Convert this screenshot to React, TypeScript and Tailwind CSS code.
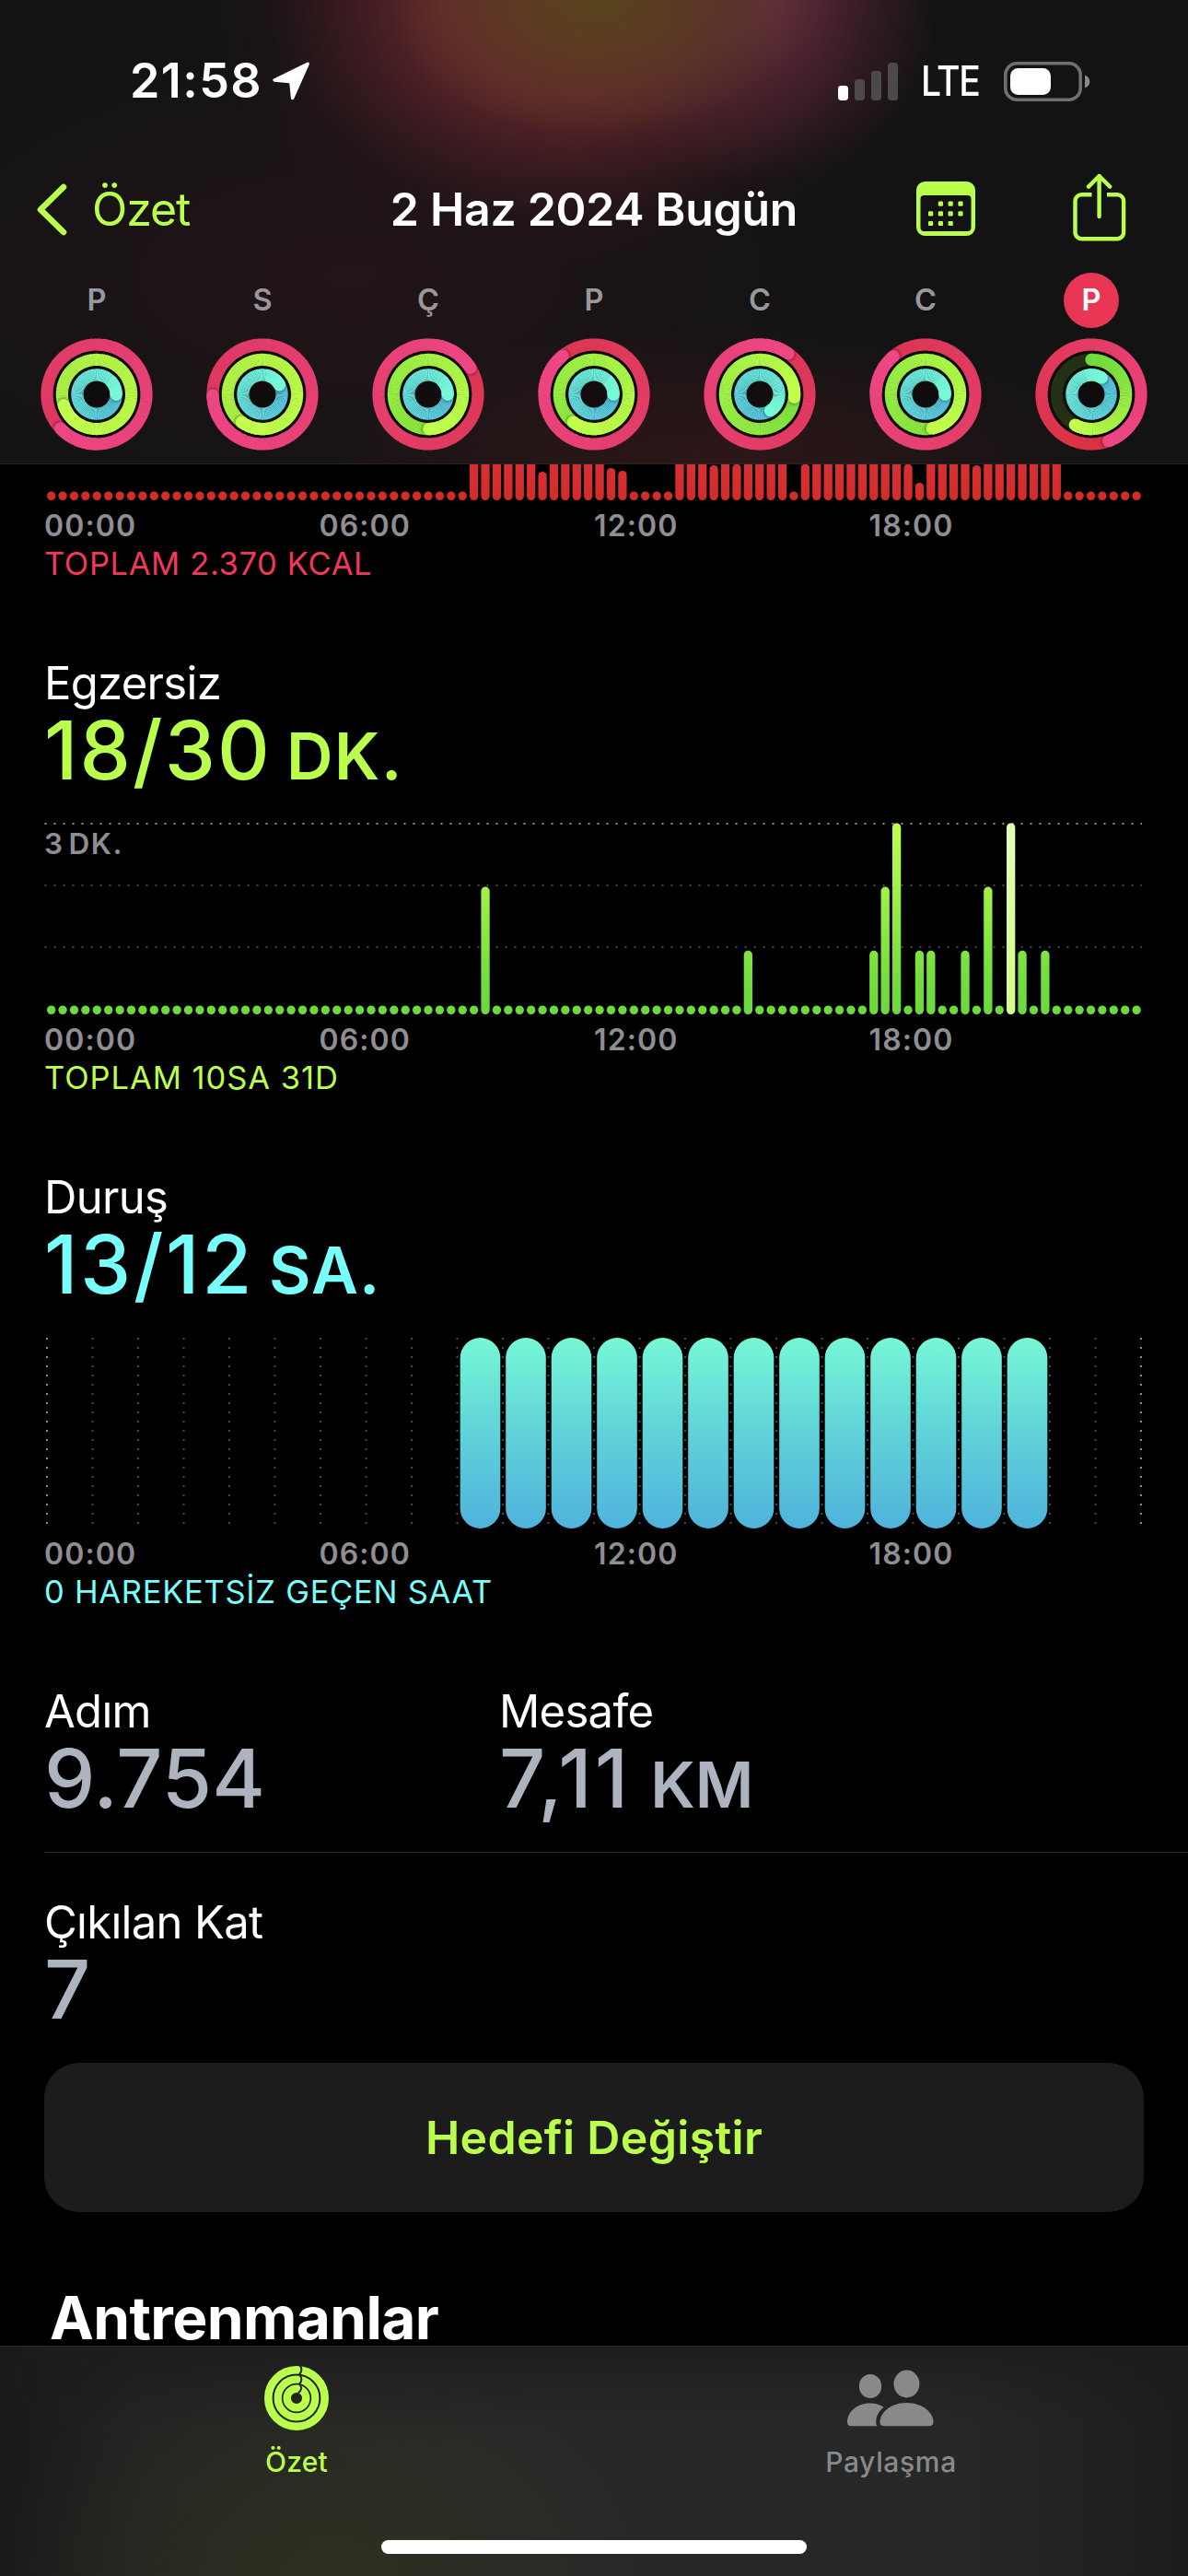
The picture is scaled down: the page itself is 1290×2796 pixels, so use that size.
import type { ReactNode } from 'react';

/* ---------- status bar ---------- */

function LocationArrow() {
  return (
    <svg className="h-[42px] w-[42px]" viewBox="0 0 42 42">
      <path
        d="M39.2 2.2 22.6 39.6 21 23.3a2 2 0 0 0-1.8-1.8L3 20Z"
        fill="#fff"
        stroke="#fff"
        strokeWidth="3.4"
        strokeLinejoin="round"
      />
    </svg>
  );
}

function Signal() {
  return (
    <svg className="h-[41px] w-[65px]" viewBox="0 0 65 41">
      <rect x="0" y="25" width="11" height="16" rx="3.4" fill="#fff" />
      <rect x="18" y="18" width="11" height="23" rx="3.4" fill="#4b494b" />
      <rect x="36" y="9" width="11" height="32" rx="3.4" fill="#4b494b" />
      <rect x="54" y="0" width="11" height="41" rx="3.4" fill="#4b494b" />
    </svg>
  );
}

function Battery() {
  return (
    <svg className="h-[43px] w-[94px]" viewBox="0 0 94 43">
      <rect x="1.8" y="1.8" width="81.4" height="39.4" rx="12.5" fill="none" stroke="#707072" strokeWidth="3.6" />
      <rect x="7" y="7" width="44" height="29" rx="8.5" fill="#fff" />
      <path d="M88 14.5c7 2.2 7 11.8 0 14Z" fill="#8a8a8c" />
    </svg>
  );
}

function StatusBar() {
  return (
    <div className="mt-[58px] flex h-[60px] items-center pl-[141px] pr-[106px] text-white">
      <span className="w-[154px] text-[52px] leading-[60px] font-semibold tracking-[1.4px]">21:58</span>
      <LocationArrow />
      <div className="ml-auto flex items-center">
        <Signal />
        <span className="mr-[27px] ml-[25px] w-[63px] origin-left scale-x-[0.88] text-[44.5px] leading-[60px] font-medium tracking-[-1.6px]">
          LTE
        </span>
        <Battery />
      </div>
    </div>
  );
}

/* ---------- navigation bar ---------- */

function CalendarIcon() {
  const rows = [[1, 2, 3], [0, 1, 2, 3], [0, 1, 2]];
  return (
    <svg className="h-[60px] w-[64px]" viewBox="0 0 64 60">
      <path
        fill="#baff4b"
        fillRule="evenodd"
        d="M9.5 0h45a9.5 9.5 0 0 1 9.5 9.5v40a9.5 9.5 0 0 1-9.5 9.5h-45A9.5 9.5 0 0 1 0 49.5v-40A9.5 9.5 0 0 1 9.5 0ZM8.500 15a4 4 0 0 0-4 4v31a4 4 0 0 0 4 4h47a4 4 0 0 0 4-4V19a4 4 0 0 0-4-4Z"
      />
      {rows.map((cols, r) =>
        cols.map((c) => (
          <rect key={`${r}-${c}`} x={13 + c * 10.8} y={21.5 + r * 10.7} width="5.2" height="5.2" rx="1.2" fill="#baff4b" />
        )),
      )}
    </svg>
  );
}

function ShareIcon() {
  return (
    <svg
      className="h-[74px] w-[58px]"
      viewBox="0 0 58 74"
      fill="none"
      stroke="#baff4b"
      strokeWidth="4.4"
      strokeLinecap="round"
      strokeLinejoin="round"
    >
      <path strokeLinecap="butt" d="M20.5 23.2H9.5a7 7 0 0 0-7 7v34a7 7 0 0 0 7 7h38.600a7 7 0 0 0 7-7v-34a7 7 0 0 0-7-7H37" />
      <path d="M28.6 47V3M17 14.6 28.6 3l11.6 11.6" />
    </svg>
  );
}

function NavBar() {
  return (
    <div className="mt-[64px] grid h-[90px] grid-cols-[1fr_auto_1fr] items-center">
      <div className="flex items-center pl-[38px] text-[#baff4b]">
        <svg className="mr-[22px] h-[60px] w-[40px]" viewBox="0 0 40 60">
          <path d="M31 6 6 30.5 31 55" fill="none" stroke="#baff4b" strokeWidth="6.6" strokeLinecap="round" strokeLinejoin="round" />
        </svg>
        <span className="text-[50px] leading-[60px] tracking-[-1.1px]">Özet</span>
      </div>
      <h1 className="text-[50px] leading-[60px] font-semibold tracking-[-0.3px] text-white">2 Haz 2024 Bugün</h1>
      <div className="flex items-center justify-end gap-[106px] pr-[67px]">
        <CalendarIcon />
        <div className="-mt-[4px]">
          <ShareIcon />
        </div>
      </div>
    </div>
  );
}

/* ---------- activity rings ---------- */

type Rgb = [number, number, number];

type RingSpec = { radius: number; head: number; from: Rgb; to: Rgb; open?: boolean };

const mix = (a: Rgb, b: Rgb, t: number) => `rgb(${a.map((v, i) => Math.round(v + (b[i] - v) * t)).join(',')})`;

const point = (r: number, deg: number): [number, number] => {
  const a = ((deg - 90) * Math.PI) / 180;
  return [61 + r * Math.cos(a), 61 + r * Math.sin(a)];
};

const arc = (r: number, a: number, b: number) => {
  const [x1, y1] = point(r, a);
  const [x2, y2] = point(r, b);
  return `M${x1} ${y1}A${r} ${r} 0 0 1 ${x2} ${y2}`;
};

function Ring({ radius, head, from, to, open }: RingSpec) {
  const start = open ? 0 : head - 360;
  const steps = 90;
  const span = (head - start) / steps;
  const [hx, hy] = point(radius, head);
  const [sx, sy] = point(radius, head + 120 / radius);
  const segment = (i: number) => (
    <path
      key={i}
      d={arc(radius, start + i * span - 0.3, start + (i + 1) * span + 0.3)}
      stroke={mix(from, to, (i + 0.5) / steps)}
      strokeWidth="13.2"
      fill="none"
    />
  );
  const all = Array.from({ length: steps }, (_, i) => i);
  return (
    <g>
      {open && (
        <>
          <circle cx="61" cy="61" r={radius} fill="none" stroke="#233014" strokeWidth="13.2" />
          <circle cx="61" cy={61 - radius} r="6.6" fill={mix(from, to, 0)} />
        </>
      )}
      {all.map(segment)}
      {!open && <circle cx={sx} cy={sy} r="5.8" fill="#000" opacity="0.36" filter="url(#head-shadow)" />}
      {all.slice(-12).map(segment)}
      <circle cx={hx} cy={hy} r="6.6" fill={mix(from, to, 1)} />
    </g>
  );
}

const PINK: Rgb = [237, 70, 133];
const LIME: Rgb = [194, 255, 76];
const AQUA: Rgb = [118, 249, 216];
const SKY: Rgb = [84, 192, 220];

type Day = { label: string; today?: boolean; move: [number, Rgb]; exercise: [number, Rgb]; open?: boolean; stand: number };

const DAYS: Day[] = [
  { label: 'P', move: [227, [222, 56, 96]], exercise: [252, [170, 238, 68]], stand: 91 },
  { label: 'S', move: [269, [222, 56, 96]], exercise: [217, [170, 238, 68]], stand: 61 },
  { label: 'Ç', move: [58, [220, 54, 82]], exercise: [179, [132, 228, 62]], stand: 91 },
  { label: 'P', move: [321, [220, 54, 82]], exercise: [217, [142, 232, 64]], stand: 91 },
  { label: 'C', move: [35, [222, 54, 86]], exercise: [95, [124, 224, 62]], stand: 147 },
  { label: 'C', move: [320, [220, 54, 82]], exercise: [169, [132, 228, 62]], stand: 91 },
  { label: 'P', today: true, move: [160, [217, 48, 64]], exercise: [208, [110, 219, 62]], open: true, stand: 32.5 },
];

function DayRings({ day }: { day: Day }) {
  return (
    <div className="flex flex-col items-center">
      <div
        className={
          day.today
            ? 'flex h-[60px] w-[60px] items-center justify-center rounded-full bg-[#e93654] text-[32.5px] leading-[60px] font-semibold text-white'
            : 'flex h-[60px] w-[60px] items-center justify-center text-[32.5px] leading-[60px] font-semibold text-[#98989d]'
        }
      >
        {day.label}
      </div>
      <svg className="mt-[11px] h-[122px] w-[122px]" viewBox="0 0 122 122">
        <circle cx="61" cy="61" r="50" fill="#0d0a0b" fillOpacity="0.7" />
        <Ring radius={54} head={day.move[0]} from={day.move[1]} to={PINK} />
        <Ring radius={37.6} head={day.exercise[0]} from={day.exercise[1]} to={LIME} open={day.open} />
        <Ring radius={21.1} head={day.stand} from={SKY} to={AQUA} />
      </svg>
    </div>
  );
}

function Header() {
  return (
    <header className="relative h-[504px] shrink-0 overflow-hidden border-b border-[#232323] bg-[#131313]">
      <div className="absolute inset-0 bg-[radial-gradient(ellipse_520px_260px_at_380px_300px,rgba(70,24,36,0.3),transparent)]" />
      <div className="absolute inset-0 bg-[radial-gradient(ellipse_440px_150px_at_780px_504px,rgba(86,28,32,0.42),transparent)]" />
      <div className="absolute inset-0 bg-[radial-gradient(ellipse_400px_290px_at_620px_0px,rgba(112,44,50,1)_0%,rgba(104,40,46,0.92)_35%,rgba(84,32,40,0.6)_60%,rgba(50,22,28,0.25)_82%,transparent)]" />
      <div className="absolute inset-0 bg-[radial-gradient(ellipse_190px_200px_at_830px_0px,rgba(102,48,66,0.85)_0%,rgba(90,40,56,0.5)_45%,transparent)]" />
      <div className="absolute inset-0 bg-[radial-gradient(ellipse_230px_150px_at_650px_0px,rgba(88,68,28,1)_0%,rgba(90,62,32,0.75)_42%,transparent)]" />
      <div className="relative flow-root">
        <StatusBar />
        <NavBar />
        <div className="mt-[24px] grid grid-cols-7 px-[15px]">
          {DAYS.map((day, i) => (
            <DayRings key={i} day={day} />
          ))}
        </div>
      </div>
    </header>
  );
}

/* ---------- charts ---------- */

const SLOTS = Array.from({ length: 96 }, (_, i) => i);
const slotX = (i: number) => 51 + i * 12.405;

const MOVE_SHORT: Record<number, number> = { 43: 31, 49: 35, 50: 32, 58: 38, 60: 39.5, 66: 39.5, 75: 39.5, 76: 19, 81: 38 };

function moveHeight(i: number) {
  if (i < 37 || (i > 50 && i < 55) || i === 65 || i > 88) return 9.5;
  return MOVE_SHORT[i] ?? 60;
}

function MoveChart() {
  return (
    <svg className="h-[39px] w-[1290px] overflow-hidden" viewBox="0 0 1290 39">
      <defs>
        <linearGradient id="move" gradientUnits="userSpaceOnUse" x1="0" y1="39" x2="0" y2="0">
          <stop offset="0" stopColor="#d22c28" />
          <stop offset="1" stopColor="#d63036" />
        </linearGradient>
      </defs>
      {SLOTS.map((i) => {
        const h = moveHeight(i);
        return <rect key={i} x={slotX(i)} y={39 - h} width="9.3" height={h} rx="4.65" fill="url(#move)" />;
      })}
    </svg>
  );
}

const EXERCISE: Record<number, number> = { 38: 2, 61: 1, 72: 1, 73: 2, 74: 3, 76: 1, 77: 1, 80: 1, 82: 2, 84: 3, 85: 1, 87: 1 };

function ExerciseChart() {
  return (
    <div className="relative h-[208px]">
      <svg className="h-[208px] w-[1290px]" viewBox="0 0 1290 208">
        <defs>
          <linearGradient id="exercise" gradientUnits="userSpaceOnUse" x1="0" y1="208" x2="0" y2="0">
            <stop offset="0" stopColor="#6bd93d" />
            <stop offset="0.15" stopColor="#70dc3e" />
            <stop offset="1" stopColor="#c2ff4d" />
          </linearGradient>
          <linearGradient id="exercise-now" gradientUnits="userSpaceOnUse" x1="0" y1="208" x2="0" y2="0">
            <stop offset="0" stopColor="#d2ff88" />
            <stop offset="1" stopColor="#e2ffb8" />
          </linearGradient>
        </defs>
        {[1, 68, 135].map((y, i) => (
          <line key={y} x1="48.5" x2="1240" y1={y} y2={y} stroke={i === 0 ? '#8e8e93' : '#48484a'} strokeWidth="2" strokeDasharray="2 8" />
        ))}
        {SLOTS.map((i) => {
          const level = EXERCISE[i] ?? 0;
          const h = level ? level * 69.2 : 9.5;
          return (
            <rect
              key={i}
              x={slotX(i)}
              y={208 - h}
              width="9.3"
              height={h}
              rx="4.65"
              fill={i === 84 ? 'url(#exercise-now)' : 'url(#exercise)'}
            />
          );
        })}
      </svg>
      <span className="absolute top-[1px] left-[48px] text-[31.5px] leading-[44px] font-semibold tracking-[1.5px] text-[#8e8e93]">
        3<span className="ml-[5px]">DK.</span>
      </span>
    </div>
  );
}

function StandChart() {
  const lines = Array.from({ length: 25 }, (_, i) => i);
  const bars = Array.from({ length: 13 }, (_, i) => i + 9);
  return (
    <svg className="h-[207px] w-[1290px]" viewBox="0 0 1290 207">
      <defs>
        <linearGradient id="stand" x1="0" y1="1" x2="0" y2="0">
          <stop offset="0" stopColor="#4fb3dc" />
          <stop offset="0.5" stopColor="#60d2d9" />
          <stop offset="1" stopColor="#76f7d6" />
        </linearGradient>
      </defs>
      {lines.map((i) => (
        <line
          key={i}
          x1={51 + i * 49.5}
          x2={51 + i * 49.5}
          y1="0"
          y2="203"
          stroke={i === 0 || i === 24 ? '#8e8e93' : '#48484a'}
          strokeWidth="2"
          strokeDasharray="2 8"
        />
      ))}
      {bars.map((i) => (
        <rect key={i} x={54.2 + i * 49.5} y="0" width="43.6" height="207" rx="21.8" fill="url(#stand)" />
      ))}
    </svg>
  );
}

function Axis() {
  return (
    <div className="mt-[6px] grid w-[1242px] grid-cols-[repeat(4,298.5px)] pl-[48px] text-[32px] leading-[44px] font-semibold tracking-[1.1px] text-[#8e8e93]">
      {['00:00', '06:00', '12:00', '18:00'].map((t) => (
        <span key={t}>{t}</span>
      ))}
    </div>
  );
}

function Metric({ title, children }: { title: string; children: ReactNode }) {
  return (
    <div>
      <div className="text-[49px] leading-[59px] tracking-[-0.7px] text-white">{title}</div>
      <div className="text-[88px] leading-[86px] font-medium whitespace-nowrap">{children}</div>
    </div>
  );
}

/* ---------- tab bar ---------- */

function RingsTabIcon() {
  return (
    <svg className="-ml-px h-[70px] w-[70px]" viewBox="-35 -35 70 70" fill="none">
      <circle r="30.7" stroke="#baff4b" strokeWidth="8.6" />
      <circle r="20.3" stroke="#baff4b" strokeWidth="8.2" />
      <circle r="10.3" stroke="#baff4b" strokeWidth="8.4" />
      <g stroke="#232524" strokeWidth="2">
        <path d="M3.5-36Q7.5-30.5 3-25.5" />
        <path d="M3.5-25.2Q7.5-20.2 3-15.5" />
        <path d="M3.5-15.2Q7.5-10 1.5-5.2" />
      </g>
    </svg>
  );
}

function PeopleIcon() {
  return (
    <svg className="-ml-px h-[62px] w-[94px]" viewBox="0 0 94 62" fill="#89898b">
      <ellipse cx="25" cy="18" rx="12.2" ry="13" />
      <ellipse cx="64.5" cy="15.5" rx="14" ry="15" />
      <path d="M25 36.5c6 0 11 1.6 14.6 4.3C34.2 45 31.4 50.5 31.2 56.5c0 2 .4 3.5 1.2 4.7H4.5C1.6 61.2 0 59.8 0 57 0 47 9.500 36.500 25 36.500Z" />
      <path d="M64.5 36C82 36 93.5 47 93.5 57c0 2.900-1.700 4.300-4.700 4.300H40.200c-3 0-4.700-1.400-4.700-4.300C35.500 47 47 36 64.500 36Z" />
    </svg>
  );
}

function TabBar() {
  return (
    <nav className="relative h-[250px] shrink-0 overflow-hidden border-t border-[#2b2b2b] bg-[linear-gradient(to_right,#191919,#222323_12%,#262828_40%,#262828_80%,#1c1d1d)]">
      <div className="absolute inset-0 bg-[radial-gradient(ellipse_360px_250px_at_350px_250px,rgba(54,57,28,0.55),transparent)]" />
      <div className="absolute inset-0 bg-[linear-gradient(to_bottom,rgba(28,28,28,0.8),transparent_35%)]" />
      <div className="relative grid grid-cols-2">
        <div className="flex flex-col items-center pt-[21px] text-[#baff4b]">
          <RingsTabIcon />
          <span className="mt-[14px] -ml-px text-[30px] leading-[40px] font-medium tracking-[0.2px]">Özet</span>
        </div>
        <div className="flex flex-col items-center pt-[25px] text-[#89898b]">
          <PeopleIcon />
          <span className="mt-[18px] text-[30px] leading-[40px] font-medium tracking-[0.65px]">Paylaşma</span>
        </div>
      </div>
      <div className="absolute top-[210px] left-[414px] h-[15px] w-[462px] rounded-full bg-white" />
    </nav>
  );
}

/* ---------- screen ---------- */

export default function App() {
  return (
    <div className="flex h-[2796px] w-[1290px] flex-col overflow-hidden bg-black font-['Inter',sans-serif] antialiased">
      <svg className="absolute h-0 w-0">
        <defs>
          <filter id="head-shadow" x="-50%" y="-50%" width="200%" height="200%">
            <feGaussianBlur stdDeviation="1.4" />
          </filter>
        </defs>
      </svg>
      <Header />
      <main className="flex h-[2042px] shrink-0 flex-col overflow-hidden">
        <section className="flex flex-col">
          <MoveChart />
          <Axis />
          <p className="pl-[48px] text-[34.5px] leading-[38px] tracking-[0.63px] text-[#f0385a]">TOPLAM 2.370 KCAL</p>
        </section>

        <section className="mt-[81px] flex flex-col">
          <div className="pl-[48px] text-[#baff4b]">
            <Metric title="Egzersiz">
              <span className="tracking-[2.1px]">18/30</span>
              <span className="ml-[16px] text-[70px] leading-none font-semibold tracking-[1.6px]">DK.</span>
            </Metric>
          </div>
          <div className="mt-[36px]">
            <ExerciseChart />
          </div>
          <Axis />
          <p className="pl-[48px] text-[34.5px] leading-[38px] tracking-[0.95px] text-[#baff4b]">TOPLAM 10SA 31D</p>
        </section>

        <section className="mt-[81px] flex flex-col">
          <div className="pl-[48px] text-[#76fffb]">
            <Metric title="Duruş">
              <span className="tracking-[2.6px]">13/12</span>
              <span className="ml-[16px] text-[70px] leading-none font-semibold tracking-[1.2px]">SA.</span>
            </Metric>
          </div>
          <div className="mt-[37px] h-[207px]">
            <StandChart />
          </div>
          <Axis />
          <p className="pl-[48px] text-[34.5px] leading-[38px] tracking-[0.72px] text-[#76fffb]">0 HAREKETSİZ GEÇEN SAAT</p>
        </section>

        <section className="mt-[81px] ml-[48px] flex flex-col text-[#adb3bf]">
          <div className="grid grid-cols-[494px_1fr] border-b border-[#2f2f31] pb-[37px]">
            <Metric title="Adım">
              <span className="tracking-[0.1px]">9.754</span>
            </Metric>
            <Metric title="Mesafe">
              <span className="tracking-[3px]">7,11</span>
              <span className="ml-[21px] text-[69px] leading-none font-semibold">KM</span>
            </Metric>
          </div>
          <div className="mt-[46px]">
            <Metric title="Çıkılan Kat">7</Metric>
          </div>
        </section>

        <button className="mx-[48px] mt-[37px] h-[162px] shrink-0 rounded-[38px] bg-[#1c1c1c] text-[50px] leading-[60px] font-semibold tracking-[0.34px] text-[#baff4b]">
          Hedefi Değiştir
        </button>

        <h2 className="mt-[85px] shrink-0 pl-[54px] text-[64px] leading-[60px] font-bold tracking-[-0.6px] text-white">Antrenmanlar</h2>
      </main>
      <TabBar />
    </div>
  );
}
